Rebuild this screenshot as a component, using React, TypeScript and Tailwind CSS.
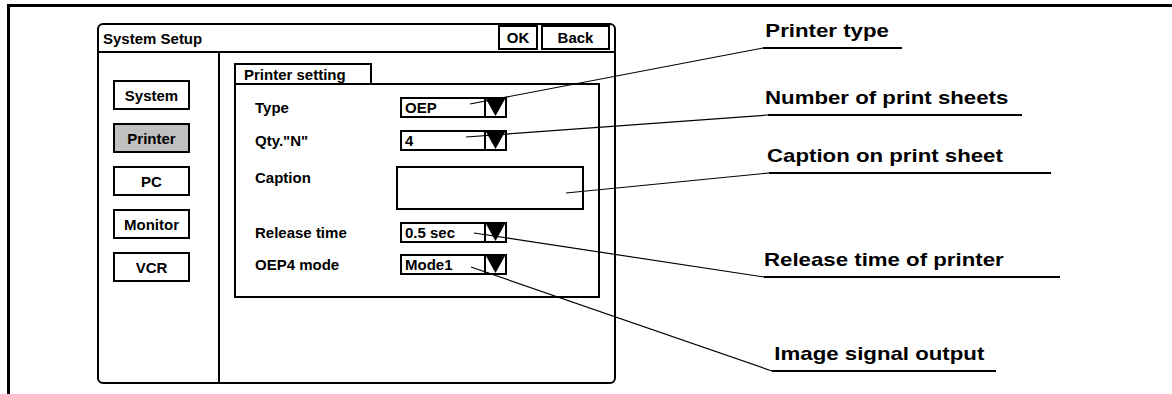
import React from "react";

const font = { fontFamily: '"Liberation Sans", Arial, sans-serif' };

function Arrow() {
  return (
    <div className="w-[21px] h-full border-l-2 border-black flex items-start">
      <svg width="19" height="17" viewBox="0 0 19 17" className="block">
        <polygon points="0,0 19,0 9.5,17" fill="#000" />
      </svg>
    </div>
  );
}

function Dropdown({ value }: { value: string }) {
  return (
    <div className="w-[107px] h-[21px] border-2 border-black flex bg-white">
      <div className="flex-1 pl-[3px] flex items-center text-[15px] leading-none">{value}</div>
      <Arrow />
    </div>
  );
}

function Row({ label, children, mt }: { label: string; children: React.ReactNode; mt: string }) {
  return (
    <div className={`flex items-center h-[21px] ${mt}`}>
      <div className="w-[145px] text-[15px] leading-none">{label}</div>
      {children}
    </div>
  );
}

function SideButton({ label, active }: { label: string; active?: boolean }) {
  return (
    <div
      className={`w-[77px] h-[30px] border-2 border-black flex items-center justify-center text-[15px] leading-none ${
        active ? "bg-[#c0c0c0]" : "bg-white"
      }`}
    >
      {label}
    </div>
  );
}

function Callout({
  text,
  cls,
  textCls,
}: {
  text: string;
  cls: string;
  textCls: string;
}) {
  return (
    <div className={`h-[30px] border-b-2 border-black pb-[4px] ${cls}`}>
      <div className={`whitespace-nowrap text-[19px] leading-[24px] origin-left scale-x-[1.17] ${textCls}`}>{text}</div>
    </div>
  );
}

export default function App() {
  return (
    <div className="relative w-[1172px] h-[394px] bg-white overflow-hidden font-bold text-black" style={font}>
      <div className="ml-[7px] mt-[4px] h-[390px] border-t-[3px] border-l-[3px] border-black flex">
        {/* Window */}
        <div className="ml-[87px] mt-[16px] w-[519px] h-[361px] border-2 border-black rounded-[6px] flex flex-col">
          <div className="h-[28px] border-b-2 border-black flex items-start">
            <div className="flex-1 pl-[4px] h-[26px] flex items-center text-[15px] leading-none">System Setup</div>
            <div className="w-[40px] h-[25px] border-2 border-black flex items-center justify-center text-[15px] leading-none">
              OK
            </div>
            <div className="ml-[3px] mr-[4px] w-[69px] h-[25px] border-2 border-black flex items-center justify-center text-[15px] leading-none">
              Back
            </div>
          </div>
          <div className="flex-1 flex">
            {/* Sidebar */}
            <div className="w-[121px] border-r-2 border-black flex flex-col gap-[13px] pl-[14px] pt-[27px]">
              <SideButton label="System" />
              <SideButton label="Printer" active />
              <SideButton label="PC" />
              <SideButton label="Monitor" />
              <SideButton label="VCR" />
            </div>
            {/* Content */}
            <div className="flex-1 pl-[14px] pt-[10px]">
              <div className="w-[138px] h-[20px] border-2 border-b-0 border-black pl-[8px] flex items-center text-[15px] leading-none">
                Printer setting
              </div>
              <div className="w-[366px] h-[215px] border-2 border-black pl-[19px] flex flex-col">
                <Row label="Type" mt="mt-[12px]">
                  <Dropdown value="OEP" />
                </Row>
                <Row label={'Qty."N"'} mt="mt-[12px]">
                  <Dropdown value="4" />
                </Row>
                <div className="flex items-start h-[44px] mt-[15px]">
                  <div className="w-[145px] mt-[3px] text-[15px] leading-[18px]">Caption</div>
                  <div className="-ml-[4px] w-[188px] h-[44px] border-2 border-black" />
                </div>
                <Row label="Release time" mt="mt-[12px]">
                  <Dropdown value="0.5 sec" />
                </Row>
                <Row label="OEP4 mode" mt="mt-[11px]">
                  <Dropdown value="Mode1" />
                </Row>
              </div>
            </div>
          </div>
        </div>
        {/* Callouts */}
        <div className="ml-[147px] flex flex-col items-start">
          <Callout text="Printer type" cls="mt-[12px] w-[139px]" textCls="pl-[2px]" />
          <Callout text="Number of print sheets" cls="mt-[37px] ml-[5px] w-[254px]" textCls="-ml-[3px]" />
          <Callout text="Caption on print sheet" cls="mt-[28px] ml-[6px] w-[282px]" textCls="-ml-[2px]" />
          <Callout text="Release time of printer" cls="mt-[74px] ml-[1px] w-[296px]" textCls="" />
          <Callout text="Image signal output" cls="mt-[64px] ml-[9px] w-[224px]" textCls="pl-[2px]" />
        </div>
      </div>
      {/* Leader lines */}
      <svg className="absolute inset-0 pointer-events-none" width="1172" height="394" viewBox="0 0 1172 394">
        <g stroke="#000" strokeWidth="1.2" fill="none">
          <line x1="763" y1="48" x2="470" y2="104" />
          <line x1="768" y1="115" x2="466" y2="137" />
          <line x1="769" y1="173" x2="566" y2="193" />
          <line x1="764" y1="277" x2="474" y2="233" />
          <line x1="772" y1="371" x2="471" y2="267" />
        </g>
      </svg>
    </div>
  );
}
